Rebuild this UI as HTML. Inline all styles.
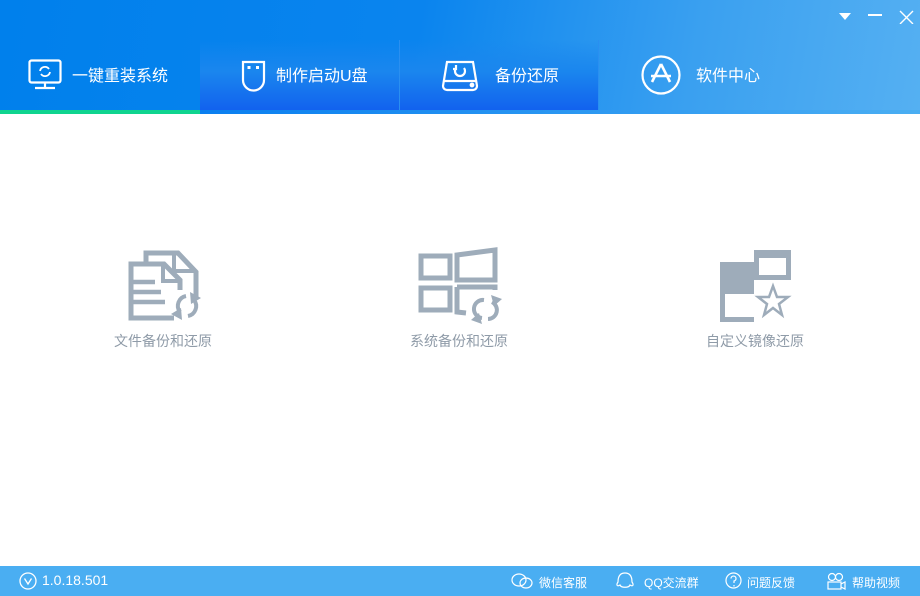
<!DOCTYPE html>
<html><head><meta charset="utf-8"><style>
*{margin:0;padding:0;box-sizing:border-box}
body{width:920px;height:596px;overflow:hidden;background:#fff;font-family:"Liberation Sans","Noto Sans CJK SC",sans-serif;position:relative}
#hdr{position:absolute;left:0;top:0;width:920px;height:114px;background:linear-gradient(100deg,#0080ec 0%,#0a84ee 45%,#3aa0f0 75%,#55b0f2 100%)}
.tab{position:absolute;top:40px;height:70px}
.dark{background:linear-gradient(180deg,rgba(20,130,240,0) 0%,#1a86ee 45%,#1262ee 100%);border-right:1px solid #2a8ff0}
#ul{position:absolute;left:0;top:110px;width:200px;height:4px;background:#10d48f}
#ul2{position:absolute;left:200px;top:110px;width:720px;height:4px;background:linear-gradient(90deg,#0a7ff0,#4aaef2)}
.t{position:absolute;color:#fff;font-size:16px;top:62px}
.lbl{position:absolute;color:#8f9ba8;font-size:14px;top:331px}
#ft{position:absolute;left:0;top:566px;width:920px;height:30px;background:#4aaef2;color:#fff;font-size:12px}
#ft div{position:absolute;top:8px}
</style></head><body>
<div id="hdr"></div>
<div class="tab dark" style="left:200px;width:200px"></div>
<div class="tab dark" style="left:400px;width:199px"></div>
<div id="ul"></div><div id="ul2"></div>
<svg style="position:absolute;left:28px;top:59px" width="34" height="31" viewBox="0 0 34 31" fill="none" stroke="#fff" stroke-width="2.2"><rect x="1.5" y="1.5" width="31" height="22" rx="2"/><path d="M17 24v4M7 29h20"/><path d="M12 12a5 5 0 0 1 9-2M22 13a5 5 0 0 1-9 2" stroke-width="1.8"/></svg>
<div class="t" style="left:72px">一键重装系统</div>
<svg style="position:absolute;left:241px;top:60px" width="25" height="32" viewBox="0 0 25 32" fill="none" stroke="#fff" stroke-width="2.2"><path d="M2 2h21v18a10.5 10.5 0 0 1-21 0z"/><rect x="6.5" y="6" width="3" height="3" fill="#fff" stroke="none"/><rect x="15" y="6" width="3" height="3" fill="#fff" stroke="none"/></svg>
<div class="t" style="left:276px">制作启动U盘</div>
<svg style="position:absolute;left:441px;top:59px" width="38" height="33" viewBox="0 0 38 33" fill="none" stroke="#fff" stroke-width="2.2"><path d="M6 3h26l4 24a4 4 0 0 1-4 4H6a4 4 0 0 1-4-4z"/><path d="M3 22h32"/><circle cx="31" cy="26" r="1.3" fill="#fff"/><path d="M15 9a5 5 0 1 0 8 0M15 6v4h-3"/></svg>
<div class="t" style="left:495px">备份还原</div>
<svg style="position:absolute;left:641px;top:55px" width="40" height="40" viewBox="0 0 40 40" fill="none" stroke="#fff" stroke-width="2.2"><circle cx="20" cy="20" r="18.5"/><path d="M20 9l-9 18M20 9l9 18M10 21h20" stroke-width="2.6"/></svg>
<div class="t" style="left:696px">软件中心</div>
<svg style="position:absolute;left:838px;top:10px" width="80" height="14" viewBox="0 0 80 14"><path d="M1 3h12l-6 7z" fill="#fff"/><path d="M30 5h14" stroke="#fff" stroke-width="2"/><path d="M62 1l13 13M75 1l-13 13" stroke="#fff" stroke-width="1.4"/></svg>
<svg style="position:absolute;left:0;top:0" width="920" height="400" fill="none" stroke="#9eacba">
<path d="M146 264v-11h32l18 19v26" stroke-width="5"/>
<path d="M174 253v18h20" stroke-width="4"/>
<path d="M174 318h-43v-54h33l16 16v10" stroke-width="5"/>
<path d="M163 265v16h16" stroke-width="4"/>
<path d="M133 282h22M133 292h28M133 302h32" stroke-width="4.5"/>
<path d="M180 312a10 10 0 0 1 6-16M194 300a10 10 0 0 1-6 16" stroke-width="4"/>
<path d="M190 292l11 6-10 6zM182 320l-11-6 10-6z" fill="#9eacba" stroke="none"/>
<path d="M421 256h29v22h-29zM421 288h29v22h-29z" stroke-width="5"/>
<path d="M457 255l38-5v30h-38zM457 287h38v3M457 287v25l9 1" stroke-width="5"/>
<path d="M482 318a9 9 0 0 1 2-18M492 302a9 9 0 0 1-4 17" stroke-width="4"/>
<path d="M491 295l11 4-8 7zM482 324l-11-4 8-7z" fill="#9eacba" stroke="none"/>
</svg>
<svg style="position:absolute;left:718px;top:250px" width="74" height="72" viewBox="0 0 74 72"><rect x="2" y="12" width="34" height="60" fill="#9eacba"/><rect x="7" y="44" width="67" height="23" fill="#fff"/><rect x="36" y="30" width="38" height="40" fill="#fff"/><rect x="36" y="12" width="2" height="14" fill="#fff"/><rect x="36" y="0" width="37" height="30" fill="#9eacba"/><rect x="41" y="8" width="27" height="17" fill="#fff"/><path d="M55 36l4 11h11l-9 7 3 11-9-7-9 7 3-11-9-7h11z" fill="none" stroke="#9eacba" stroke-width="2.5"/></svg>
<div class="lbl" style="left:114px">文件备份和还原</div>
<div class="lbl" style="left:410px">系统备份和还原</div>
<div class="lbl" style="left:706px">自定义镜像还原</div>
<div id="ft">
<svg style="position:absolute;left:19px;top:6px" width="18" height="18" viewBox="0 0 18 18" fill="none" stroke="#fff" stroke-width="1.3"><circle cx="9" cy="9" r="8"/><path d="M5.5 6.5L9 12l3.5-5.5"/></svg>
<div style="left:42px;font-size:14px;top:6px">1.0.18.501</div>
<svg style="position:absolute;left:511px;top:7px" width="22" height="16" viewBox="0 0 22 16" fill="none" stroke="#fff" stroke-width="1.2"><ellipse cx="8" cy="7" rx="7" ry="6"/><ellipse cx="15" cy="10" rx="6" ry="5"/></svg>
<div style="left:539px">微信客服</div>
<svg style="position:absolute;left:615px;top:6px" width="20" height="18" viewBox="0 0 20 18" fill="none" stroke="#fff" stroke-width="1.2"><path d="M5 13c-3 2-4 0-2-3 0-7 3-9 7-9s7 2 7 9c2 3 1 5-2 3-1 3-9 3-10 0z"/></svg>
<div style="left:644px">QQ交流群</div>
<svg style="position:absolute;left:725px;top:6px" width="17" height="18" viewBox="0 0 17 18" fill="none" stroke="#fff" stroke-width="1.2"><circle cx="8.5" cy="8.5" r="7.5"/><path d="M6 6.5a2.5 2.5 0 1 1 3 2.5v2M9 13v1.5"/></svg>
<div style="left:747px">问题反馈</div>
<svg style="position:absolute;left:825px;top:6px" width="22" height="18" viewBox="0 0 22 18" fill="none" stroke="#fff" stroke-width="1.2"><circle cx="7" cy="5" r="3.5"/><circle cx="14" cy="5" r="3.5"/><rect x="3" y="10" width="13" height="7"/><path d="M16 12l4-2v7l-4-2"/></svg>
<div style="left:852px">帮助视频</div>
</div>
</body></html>
